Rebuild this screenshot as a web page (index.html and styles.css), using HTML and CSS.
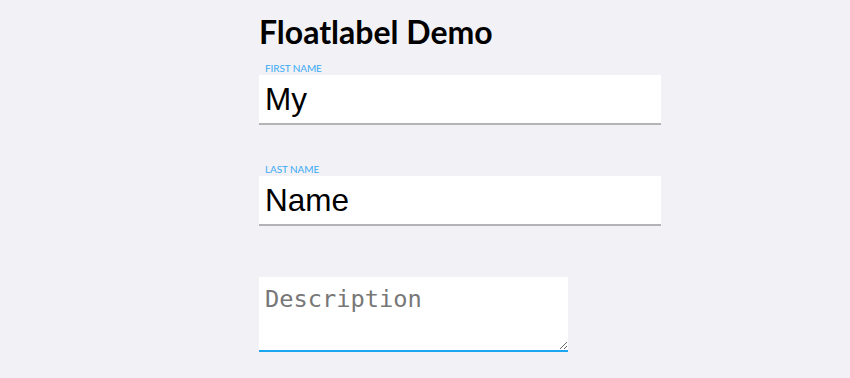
FILE: index.html
```html
<!DOCTYPE html>
<html>
<head>
<meta charset="utf-8">
<title>Floatlabel Demo</title>
<link rel="stylesheet" href="styles.css">
</head>
<body>
<main class="page">
  <h1 class="title">Floatlabel Demo</h1>
  <form class="form">
    <div class="field">
      <label class="float-label" for="first">FIRST NAME</label>
      <input class="text-input" id="first" type="text" value="My">
    </div>
    <div class="field">
      <label class="float-label" for="last">LAST NAME</label>
      <input class="text-input" id="last" type="text" value="Name">
    </div>
    <div class="field">
      <span class="float-label hidden-label">DESCRIPTION</span>
      <textarea class="text-area" placeholder="Description"></textarea>
    </div>
  </form>
</main>
</body>
</html>
```

FILE: styles.css
```css
html, body {
  margin: 0;
  padding: 0;
  background: #f2f2f6;
}
body {
  font-family: "Lato", "Liberation Sans", sans-serif;
}
.page {
  width: 402px;
  margin-left: 259px;
  padding-top: 13px;
}
.title {
  margin: 0;
  font-family: "Lato", sans-serif;
  font-weight: 700;
  font-size: 32px;
  line-height: 38px;
  color: #000;
}
.form {
  display: flex;
  flex-direction: column;
  padding-top: 12px;
}
.field {
  display: flex;
  flex-direction: column;
  align-items: flex-start;
  margin-bottom: 39px;
}
.float-label {
  font-family: "Lato", sans-serif;
  font-size: 10px;
  line-height: 10px;
  height: 10px;
  padding-left: 6px;
  color: #3aa9f4;
  letter-spacing: -0.1px;
}
.hidden-label {
  visibility: hidden;
}
.text-input {
  box-sizing: border-box;
  width: 402px;
  height: 50px;
  margin: 2px 0 0;
  padding: 0 6px;
  border: none;
  border-bottom: 2px solid #b3b3b5;
  background: #fff;
  font-family: "Liberation Sans", Arial, sans-serif;
  font-size: 31.5px;
  color: #000;
  outline: none;
}
.text-area {
  box-sizing: border-box;
  width: 309px;
  height: 75px;
  margin: 2px 0 0;
  padding: 8px 6px 4px;
  border: none;
  border-bottom: 2px solid #1ba6f0;
  background: #fff;
  font-family: "DejaVu Sans Mono", monospace;
  font-size: 23.7px;
  color: #000;
  outline: none;
}
.text-area::placeholder {
  color: #777;
}
```
